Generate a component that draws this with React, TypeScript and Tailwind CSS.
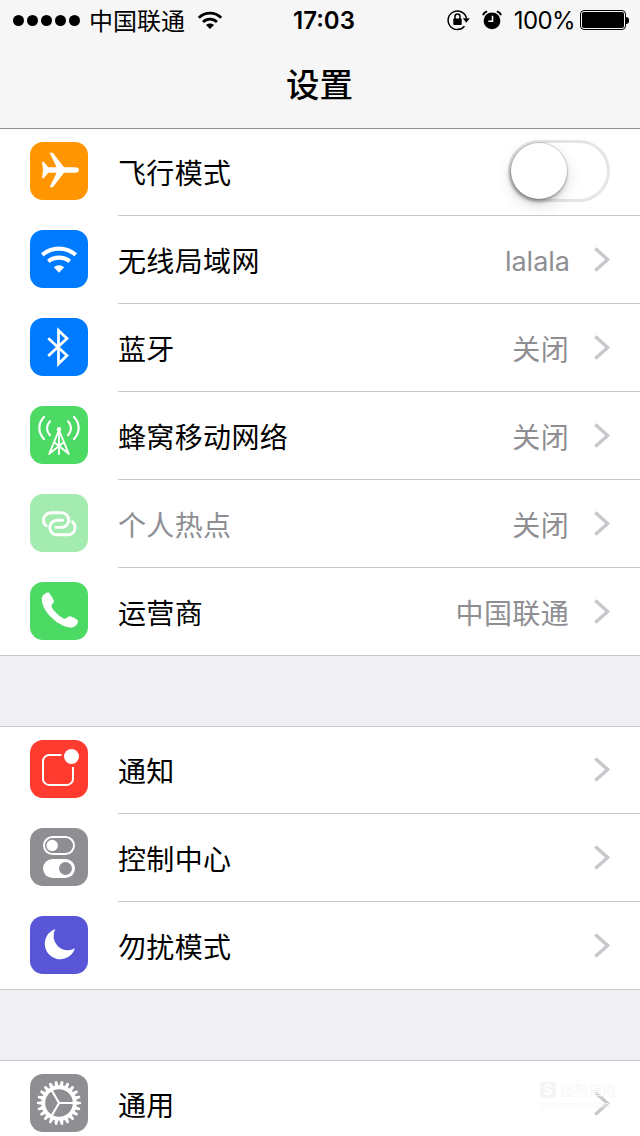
import type { ReactNode } from 'react'
import { clsx } from 'clsx'

type RowProps = {
  icon: ReactNode
  color: string
  label: string
  value?: string
  disabled?: boolean
  control?: ReactNode
}

function Chevron() {
  return (
    <svg viewBox="0 0 18 28" className="mb-0.5 w-[18px] h-7 ml-6 mr-[29px] shrink-0" fill="none">
      <path d="M2.3 3.5 14.6 14.5 2.3 25.5" stroke="#c7c7cc" strokeWidth="3.4" />
    </svg>
  )
}

function Row({ icon, color, label, value, disabled, control }: RowProps) {
  const latin = /^[a-z]+$/i.test(value ?? '')
  return (
    <li className="group flex h-[88px] first:h-[87px] pl-[30px]">
      <span
        className={clsx(
          'mt-3.5 group-first:mt-[13px] size-[58px] rounded-[13px] shrink-0 overflow-hidden',
          color,
          disabled && 'opacity-50',
        )}
      >
        <svg viewBox="0 0 58 58" className="size-full" fill="none">
          {icon}
        </svg>
      </span>
      <div className="ml-[30px] flex-1 flex items-center border-b border-[#c8c7cc] group-last:border-transparent">
        <span
          className={clsx(
            'flex-1 pt-1 text-[28px] leading-10 tracking-[0.35px]',
            disabled ? 'text-[#8e8e93]' : 'text-black',
          )}
        >
          {label}
        </span>
        {value && (
          <span
            className={clsx(
              'pt-1 leading-10 text-[#8e8e93]',
              latin ? '-mr-px text-[27px]' : 'text-[28px] tracking-[0.35px]',
            )}
          >
            {value}
          </span>
        )}
        {control ?? <Chevron />}
      </div>
    </li>
  )
}

function Section({ children, top }: { children: ReactNode; top?: string }) {
  return (
    <section
      className={clsx(
        'bg-white border-t shadow-[inset_0_-1px_0_#c8c7cc]',
        top ?? 'border-[#c8c7cc]',
      )}
    >
      <ul>{children}</ul>
    </section>
  )
}

function Toggle() {
  return (
    <span className="mb-0.5 mr-[30px] flex w-[102px] h-[62px] rounded-full border-3 border-[#e5e5e5]">
      <span className="size-14 rounded-full bg-white shadow-[0_0_1px_1px_rgba(0,0,0,0.14),-1px_3px_4px_rgba(0,0,0,0.3),0_6px_16px_rgba(0,0,0,0.14)]" />
    </span>
  )
}

const airplane = (
  <path
    fill="#fff"
    d="M12 19.7h1.7l4.6 5.6h8.3L19.6 10.7h3.2L34 25.3h11.3c2.3 0 3.7 1.1 3.7 2.7s-1.4 2.7-3.700 2.700H34L22.800 45.300h-3.200l7-14.600h-8.300L13.700 36.300H12l1-8.300z"
  />
)

const wifi = (
  <g>
    <path d="M12.3 24.8c9.6-8.3 23.8-8.3 33.4 0" stroke="#fff" strokeWidth="4.2" />
    <path d="M18.3 31.3c6.4-5 15-5 21.4 0" stroke="#fff" strokeWidth="4.2" />
    <path d="M23.8 37.3c3.2-2.7 7.2-2.7 10.4 0L29 42.7z" fill="#fff" />
  </g>
)

const bluetooth = (
  <path
    d="M18.2 20.2 37 37.500l-8.500 8.200V12.400l8.500 8.100L18.200 37.900"
    stroke="#fff"
    strokeWidth="2.7"
  />
)

const cellular = (
  <g stroke="#fff" strokeWidth="2.2" strokeLinecap="round">
    <path d="M14 11c-6.2 6.5-6.2 15.5 0 22M20 15.3c-4 4.2-4 9.8 0 14M44 11c6.2 6.5 6.2 15.5 0 22M38 15.3c4 4.2 4 9.8 0 14" />
    <path
      d="m29 24-9.8 24M29 24l9.8 24M29 24v24M19.5 47.5l14-11M38.5 47.5l-14-11"
      strokeWidth="1.9"
    />
    <circle cx="29" cy="23.3" r="2.2" fill="#fff" stroke="none" />
  </g>
)

const hotspot = (
  <g stroke="#fff" strokeWidth="2.9" strokeLinecap="round">
    <path d="M16.2 31.8A7.2 7.2 0 0 1 13.5 26a7.2 7.2 0 0 1 7.2-7.2h10.8a7.3 7.3 0 0 1 0 14.6H26" />
    <path d="M42.4 27.8A7.2 7.2 0 0 1 45.1 33.6a7.2 7.2 0 0 1-7.2 7.2H27.1a7.3 7.3 0 0 1 0-14.6h5.5" />
  </g>
)

const phone = (
  <path
    fill="#fff"
    d="M14.1 12.3c1.4-1.1 3-2.2 4.3-1.7 1.5.6 5 6.5 5.5 8.5.5 1.900-2.500 3-2.400 4.900.2 3.400 9.600 12.500 13.100 12.700 2 .1 3.200-2.700 5.200-2.500 2.100.3 7.500 2.900 8.100 4.500.6 1.500-1.400 4.400-3 5.500C36.500 50.300 11.200 32.400 11.800 16.500c.1-1.400 1-3.100 2.300-4.200z"
  />
)

const notifications = (
  <g>
    <path
      d="M31.5 15H19.3a6.3 6.3 0 0 0-6.3 6.3v17.4a6.3 6.3 0 0 0 6.3 6.3h17.4a6.3 6.3 0 0 0 6.3-6.3V27"
      stroke="#fff"
      strokeWidth="2"
    />
    <circle cx="41.5" cy="16.5" r="7.5" fill="#fff" />
  </g>
)

const controlCenter = (
  <g>
    <rect x="14" y="9" width="30" height="17" rx="8.5" stroke="#fff" strokeWidth="2" />
    <circle cx="22.2" cy="17.5" r="5.7" fill="#fff" />
    <rect x="13" y="31" width="32" height="19" rx="9.5" fill="#fff" />
    <circle cx="35.5" cy="40.5" r="6.5" fill="#8e8e93" />
  </g>
)

const moon = (
  <path fill="#fff" d="M25.3 13A15.5 15.5 0 1 0 45 32.3A14.3 14.3 0 0 1 25.3 13z" />
)

function Gear() {
  const teeth = Array.from({ length: 22 }, (_, i) => (i * 360) / 22 + 90)
  return (
    <g stroke="#fff">
      <circle cx="29" cy="29" r="15.7" strokeWidth="3.8" />
      {teeth.map((angle) => (
        <path
          key={angle}
          d="M26.9 12.5 27.9 7h2.2l1 5.5z"
          fill="#fff"
          stroke="none"
          transform={`rotate(${angle} 29 29)`}
        />
      ))}
      <path d="M29 29h15M29 29l-7.5-13M29 29l-7.5 13" strokeWidth="2.2" />
    </g>
  )
}

function StatusBar() {
  return (
    <div className="flex h-10 items-center text-black">
      <div className="flex flex-1 items-center pl-[13px]">
        <span className="flex gap-[3px]">
          {[0, 1, 2, 3, 4].map((dot) => (
            <i key={dot} className="size-[11px] rounded-full bg-black" />
          ))}
        </span>
        <span className="ml-[9px] pt-[3px] text-2xl leading-8">中国联通</span>
        <svg viewBox="0 0 26 20" className="ml-3 w-[26px] h-5" fill="none">
          <path
            d="M1.8 7.7c6.4-6.2 16-6.2 22.4 0M6 12c4-3.9 10-3.9 14 0"
            stroke="#000"
            strokeWidth="2.7"
          />
          <path d="M9 15.1c2.4-2 5.6-2 8 0l-4 4z" fill="#000" />
        </svg>
      </div>
      <time className="pl-[6px] pt-0.5 text-2xl font-semibold leading-8">17:03</time>
      <div className="flex flex-1 items-center justify-end pr-[11px]">
        <svg viewBox="0 0 24 22" className="w-6 h-[22px]" fill="none">
          <path d="M18.5 17.3a9.3 9.3 0 1 1 2-8" stroke="#000" strokeWidth="1.5" />
          <path d="M16.8 9.3h7l-3.5 4.5z" fill="#000" />
          <rect x="7.3" y="9.5" width="8.4" height="6.5" rx="0.7" fill="#000" />
          <path d="M9 10V7.5a2.5 2.5 0 0 1 5 0V10" stroke="#000" strokeWidth="1.5" />
        </svg>
        <svg viewBox="0 0 20 20" className="ml-3 w-5 h-5" fill="none">
          <circle cx="10" cy="10.8" r="8.4" fill="#000" />
          <path
            d="M1 5.2C1.6 3.3 3.2 1.9 5.2 1.4M19 5.2c-.6-1.9-2.2-3.3-4.2-3.8"
            stroke="#000"
            strokeWidth="1.8"
          />
          <path d="M10.5 5.8v5.4H6.3" stroke="#fff" strokeWidth="1.5" />
        </svg>
        <span className="ml-3 pt-0.5 text-2xl leading-8 tracking-[-0.6px]">100%</span>
        <span className="ml-[5px] w-[46px] h-5 rounded-[4px] border border-black p-px">
          <span className="block size-full rounded-[2px] bg-black" />
        </span>
        <i className="w-[3px] h-[7px] rounded-r-full bg-black" />
      </div>
    </div>
  )
}

export default function App() {
  return (
    <div className="relative w-[640px] h-[1136px] overflow-hidden bg-[#efeff4] font-['Inter','Noto_Sans_CJK_SC',sans-serif]">
      <header className="h-32 bg-[#f6f6f6]">
        <StatusBar />
        <h1 className="pt-5 pr-px text-center text-[33.5px] font-medium leading-[50px]">设置</h1>
      </header>
      <main className="flex flex-col gap-[70px]">
        <Section top="border-[#929296]">
          <Row icon={airplane} color="bg-[#ff9500]" label="飞行模式" control={<Toggle />} />
          <Row icon={wifi} color="bg-[#007aff]" label="无线局域网" value="lalala" />
          <Row icon={bluetooth} color="bg-[#007aff]" label="蓝牙" value="关闭" />
          <Row icon={cellular} color="bg-[#4cd964]" label="蜂窝移动网络" value="关闭" />
          <Row icon={hotspot} color="bg-[#4cd964]" label="个人热点" value="关闭" disabled />
          <Row icon={phone} color="bg-[#4cd964]" label="运营商" value="中国联通" />
        </Section>
        <Section>
          <Row icon={notifications} color="bg-[#ff3b30]" label="通知" />
          <Row icon={controlCenter} color="bg-[#8e8e93]" label="控制中心" />
          <Row icon={moon} color="bg-[#5856d6]" label="勿扰模式" />
        </Section>
        <Section>
          <Row icon={<Gear />} color="bg-[#8e8e93]" label="通用" />
        </Section>
      </main>
      <div className="absolute left-[540px] top-[1081px] text-[#f7f7f7]">
        <div className="flex items-center gap-1 text-[14px] leading-[18px]">
          <b className="grid size-4 place-content-center rounded bg-[#f5f5f5] text-white">S</b>
          搜狗指南
        </div>
        <div className="text-[8px] leading-3">zhinan.sogou.com</div>
      </div>
    </div>
  )
}
